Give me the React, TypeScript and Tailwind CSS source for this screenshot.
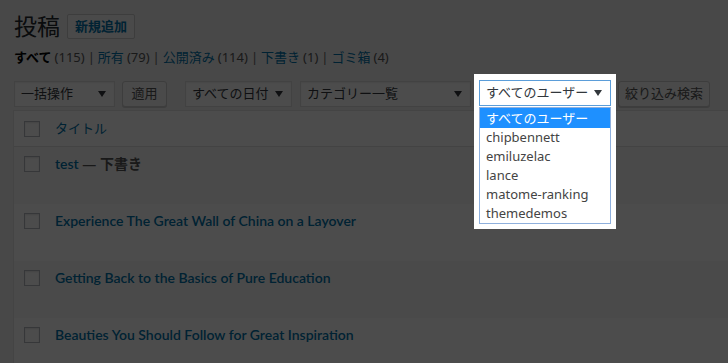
import React from "react";

const users = ["chipbennett", "emiluzelac", "lance", "matome-ranking", "themedemos"];

const posts = [
  { title: "test", draft: true },
  { title: "Experience The Great Wall of China on a Layover" },
  { title: "Getting Back to the Basics of Pure Education" },
  { title: "Beauties You Should Follow for Great Inspiration" },
];

const filters = [
  { label: "所有", count: 79 },
  { label: "公開済み", count: 114 },
  { label: "下書き", count: 1 },
  { label: "ゴミ箱", count: 4 },
];

const Arrow = () => (
  <svg width="8" height="6" viewBox="0 0 8 6" className="shrink-0">
    <path d="M0 0h8L4 6z" fill="#32373c" />
  </svg>
);

const FakeSelect = ({ label, w }: { label: string; w: string }) => (
  <div
    className={`${w} h-[26px] flex items-center justify-between pl-[6px] pr-[8px] bg-white border border-[#ddd] shadow-[inset_0_1px_2px_rgba(0,0,0,0.07)] text-[13px] text-[#32373c]`}
  >
    <span>{label}</span>
    <Arrow />
  </div>
);

const Checkbox = () => (
  <div className="w-[16px] h-[16px] bg-white border border-[#b4b9be] shadow-[inset_0_1px_2px_rgba(0,0,0,0.1)] shrink-0" />
);

export default function App() {
  return (
    <div className="relative w-[728px] h-[363px] overflow-hidden bg-[#f1f1f1] font-['Noto_Sans','Noto_Sans_CJK_JP',sans-serif] text-[#444]">
      <div className="pl-[14px] pt-[12px]">
        {/* Heading */}
        <div className="flex items-center h-[29px]">
          <h1 className="text-[23px] leading-[29px] text-[#23282d]">投稿</h1>
          <button className="ml-[7px] h-[25px] px-[7px] border border-[#ccc] bg-[#f7f7f7] rounded-[2px] text-[13px] font-semibold text-[#0073aa] leading-none">
            新規追加
          </button>
        </div>

        {/* Status filters */}
        <div className="mt-[7px] h-[18px] flex items-center text-[13px] leading-[18px] text-[#666] whitespace-nowrap">
          <span className="font-bold text-black">すべて</span>
          <span className="ml-[3px] text-[#555]">(115)</span>
          {filters.map((f) => (
            <React.Fragment key={f.label}>
              <span className="mx-[3px] text-[#666]">|</span>
              <span className="text-[#0073aa]">{f.label}</span>
              <span className="ml-[3px] text-[#555]">({f.count})</span>
            </React.Fragment>
          ))}
        </div>

        {/* Tablenav */}
        <div className="mt-[15px] flex items-center whitespace-nowrap">
          <FakeSelect label="一括操作" w="w-[101px]" />
          <button className="ml-[7px] h-[26px] w-[45px] border border-[#ccc] bg-[#f7f7f7] rounded-[3px] shadow-[0_1px_0_#ccc] text-[13px] text-[#555]">
            適用
          </button>
          <div className="ml-[18px]">
            <FakeSelect label="すべての日付" w="w-[107px]" />
          </div>
          <div className="ml-[8px]">
            <FakeSelect label="カテゴリー一覧" w="w-[171px]" />
          </div>
          <div className="ml-[8px] w-[132px] h-[26px]" />
          <button className="ml-[7px] h-[26px] w-[92px] border border-[#ccc] bg-[#f7f7f7] rounded-[3px] shadow-[0_1px_0_#ccc] text-[13px] text-[#555]">
            絞り込み検索
          </button>
        </div>

        {/* Posts table */}
        <div className="mt-[3px] -ml-[1px] w-[730px] bg-white border border-[#e5e5e5] shadow-[0_1px_1px_rgba(0,0,0,0.04)]">
          <div className="h-[36px] flex items-center border-b border-[#e1e1e1] pl-[10px]">
            <Checkbox />
            <span className="ml-[15px] text-[13px] text-[#0073aa]">タイトル</span>
          </div>
          {posts.map((p, i) => (
            <div
              key={p.title}
              className={`h-[57px] flex items-start pl-[10px] pt-[9px] ${i % 2 === 0 ? "bg-[#f9f9f9]" : "bg-white"}`}
            >
              <Checkbox />
              <div className="ml-[15px] -mt-[2px] text-[14px] leading-[20px] font-semibold font-['Lato','Noto_Sans_CJK_JP',sans-serif] text-[#0073aa]">
                {p.title}
                {p.draft && <span className="text-[#555] font-['Noto_Sans','Noto_Sans_CJK_JP',sans-serif]"> — 下書き</span>}
              </div>
            </div>
          ))}
        </div>
      </div>

      {/* Dim overlay */}
      <div className="absolute inset-0 bg-black/70" />

      {/* Highlighted user filter with open dropdown */}
      <div className="absolute left-[474px] top-[74px] w-[142px] h-[155px] bg-white pl-[5px] pt-[6px]">
        <div className="w-[132px] h-[26px] flex items-center justify-between pl-[6px] pr-[8px] bg-white border border-[#5b9dd9] text-[13px] text-[#32373c] font-['Noto_Sans','Noto_Sans_CJK_JP',sans-serif]">
          <span>すべてのユーザー</span>
          <Arrow />
        </div>
        <div className="mt-[1px] w-[132px] border border-[#8fb0dd] bg-white text-[13px] font-['Noto_Sans','Noto_Sans_CJK_JP',sans-serif]">
          <div className="h-[20px] leading-[20px] pl-[6px] bg-[#1e90ff] text-white">すべてのユーザー</div>
          {users.map((u) => (
            <div key={u} className="h-[19px] leading-[19px] pl-[6px] text-[#444]">
              {u}
            </div>
          ))}
        </div>
      </div>
    </div>
  );
}
